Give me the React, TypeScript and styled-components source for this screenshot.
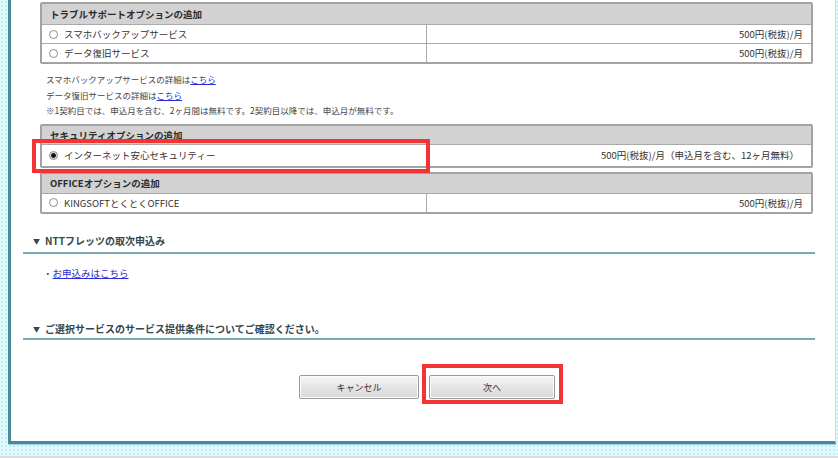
import React from "react";
import styled, { createGlobalStyle } from "styled-components";

const Global = createGlobalStyle`
  html, body { margin: 0; padding: 0; background: #ffffff; }
  body { font-family: "Noto Sans CJK JP", "Noto Sans", sans-serif; color: #333; }
`;

const Page = styled.div`
  width: 838px;
  height: 456px;
  border-bottom: 2px solid #dcdcdc;
  background-color: #e2f9fd;
  background-image: radial-gradient(#bfeef7 0.9px, transparent 1.3px);
  background-size: 4px 4px;
  overflow: hidden;
`;

const Panel = styled.div`
  margin-left: 8px;
  width: 824px;
  height: 441px;
  background: #ffffff;
  border-left: 3px solid #4a8b9a;
  border-bottom: 3px solid #47899a;
  border-right: 1px solid #d6d6d6;
  box-shadow: 0 1px 0 #a9d3dc;
  display: flex;
  flex-direction: column;
  padding: 2px 20px 0 12px;
  box-sizing: content-box;
  box-sizing: border-box;
  height: 444px;
  width: 828px;
`;

const Options = styled.div`
  display: flex;
  flex-direction: column;
  padding: 0 2px 0 17px;
`;

const Table = styled.div<{ $mt?: number }>`
  border: 2px solid #a3a3a3;
  border-radius: 2px;
  box-shadow: inset 0 0 0 1px #d9d9d9;
  margin-top: ${(p) => p.$mt ?? 0}px;
  font-size: 9.5px;
`;

const Header = styled.div<{ $h: number }>`
  height: ${(p) => p.$h}px;
  line-height: ${(p) => p.$h}px;
  background: #d2d2d2;
  padding-left: 8px;
  font-weight: bold;
  color: #2a2a2a;
`;

const Row = styled.div<{ $h: number }>`
  position: relative;
  display: grid;
  grid-template-columns: 385px 1fr;
  height: ${(p) => p.$h}px;
  border-top: 1px solid #a9a9a9;
  background: #fff;
`;

const NameCell = styled.div`
  display: flex;
  align-items: center;
  gap: 6px;
  padding-left: 7px;
  border-right: 1px solid #a9a9a9;
  color: #333;
`;

const PriceCell = styled.div<{ $pr?: number }>`
  display: flex;
  align-items: center;
  justify-content: flex-end;
  padding-right: ${(p) => p.$pr ?? 8}px;
  color: #333;
  white-space: nowrap;
`;

const Radio = styled.span<{ $checked?: boolean }>`
  width: 9px;
  height: 9px;
  box-sizing: border-box;
  border-radius: 50%;
  border: 1px solid #8c8c8c;
  background: ${(p) =>
    p.$checked
      ? "radial-gradient(circle, #111 0, #111 2px, #cfcfcf 2.6px, #f4f4f4 4px)"
      : "#fff"};
  flex: none;
`;

const Highlight = styled.div<{ $l: number; $t: number; $w: number; $h: number }>`
  position: absolute;
  left: ${(p) => p.$l}px;
  top: ${(p) => p.$t}px;
  width: ${(p) => p.$w}px;
  height: ${(p) => p.$h}px;
  border: 4px solid #f23434;
  box-sizing: border-box;
  pointer-events: none;
  z-index: 2;
`;

const Notes = styled.div`
  margin-top: 8px;
  padding-left: 6px;
  font-size: 8.5px;
  line-height: 15.5px;
  color: #444;
`;

const Link = styled.a`
  color: #2b2bd6;
  text-decoration: underline;
`;

const Heading = styled.div<{ $mt: number; $pb: number }>`
  margin-top: ${(p) => p.$mt}px;
  padding: 0 0 ${(p) => p.$pb}px 10px;
  line-height: 16px;
  font-size: 10px;
  font-weight: bold;
  color: #34474c;
  border-bottom: 2px solid #78aab6;
  display: flex;
  gap: 5px;
  align-items: center;
`;

const Tri = styled.span`
  font-size: 7px;
  color: #34474c;
`;

const LinkLine = styled.div`
  margin-top: 11px;
  padding-left: 20px;
  line-height: 16px;
  font-size: 9.5px;
  color: #555;
`;

const ButtonRow = styled.div`
  margin-top: 32px;
  padding-left: 276px;
  display: flex;
  gap: 10px;
`;

const ButtonWrap = styled.div`
  position: relative;
`;

const Button = styled.button<{ $w: number }>`
  width: ${(p) => p.$w}px;
  height: 24px;
  border: 1px solid #9a9a9a;
  border-radius: 2px;
  background: linear-gradient(#f7f7f7, #e2e2e2 60%, #d9d9d9);
  box-shadow: inset 0 0 0 1px #fbfbfb;
  font-family: "Noto Sans CJK JP", sans-serif;
  font-size: 9px;
  color: #333;
  padding: 0;
`;

export default function App() {
  return (
    <>
      <Global />
      <Page>
        <Panel>
          <Options>
            <Table>
              <Header $h={20}>トラブルサポートオプションの追加</Header>
              <Row $h={18}>
                <NameCell>
                  <Radio />
                  スマホバックアップサービス
                </NameCell>
                <PriceCell>500円(税抜)/月</PriceCell>
              </Row>
              <Row $h={18}>
                <NameCell>
                  <Radio />
                  データ復旧サービス
                </NameCell>
                <PriceCell>500円(税抜)/月</PriceCell>
              </Row>
            </Table>
            <Notes>
              <div>
                スマホバックアップサービスの詳細は<Link href="#">こちら</Link>
              </div>
              <div>
                データ復旧サービスの詳細は<Link href="#">こちら</Link>
              </div>
              <div>
                ※1契約目では、申込月を含む、2ヶ月間は無料です。2契約目以降では、申込月が無料です。
              </div>
            </Notes>
            <Table $mt={5}>
              <Header $h={18}>セキュリティオプションの追加</Header>
              <Row $h={21}>
                <NameCell>
                  <Radio $checked />
                  インターネット安心セキュリティー
                </NameCell>
                <PriceCell $pr={12}>
                  500円(税抜)/月（申込月を含む、12ヶ月無料）
                </PriceCell>
                <Highlight $l={-10} $t={-6} $w={398} $h={34} />
              </Row>
            </Table>
            <Table $mt={4}>
              <Header $h={19}>OFFICEオプションの追加</Header>
              <Row $h={18}>
                <NameCell>
                  <Radio />
                  KINGSOFTとくとくOFFICE
                </NameCell>
                <PriceCell>500円(税抜)/月</PriceCell>
              </Row>
            </Table>
          </Options>
          <Heading $mt={19} $pb={3}>
            <Tri>▼</Tri>NTTフレッツの取次申込み
          </Heading>
          <LinkLine>
            ・<Link href="#">お申込みはこちら</Link>
          </LinkLine>
          <Heading $mt={40} $pb={1}>
            <Tri>▼</Tri>ご選択サービスのサービス提供条件についてご確認ください。
          </Heading>
          <ButtonRow>
            <ButtonWrap>
              <Button $w={120}>キャンセル</Button>
            </ButtonWrap>
            <ButtonWrap>
              <Button $w={126}>次へ</Button>
              <Highlight $l={-7} $t={-8} $w={141} $h={40} />
            </ButtonWrap>
          </ButtonRow>
        </Panel>
      </Page>
    </>
  );
}
